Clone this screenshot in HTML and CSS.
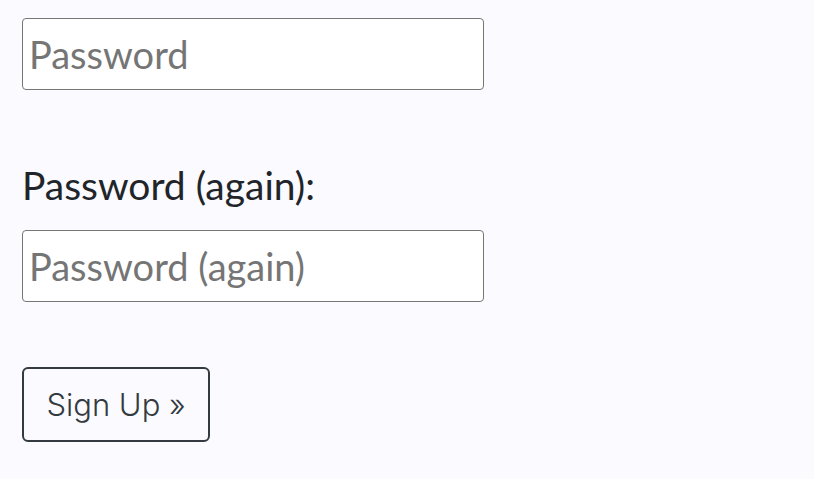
FILE: index.html
```html
<!DOCTYPE html>
<html>
<head>
<meta charset="utf-8">
<link rel="stylesheet" href="styles.css">
</head>
<body>
<form class="form">
  <input class="field" type="password" placeholder="Password">
  <label class="label">Password (again):</label>
  <input class="field field-again" type="password" placeholder="Password (again)">
  <button class="btn" type="button">Sign Up »</button>
</form>
</body>
</html>
```
FILE: styles.css
```css
html, body {
  margin: 0;
  background: #fafaff;
}
body {
  padding: 18px 22px;
  font-family: "Lato", "Liberation Sans", sans-serif;
}
.form {
  display: flex;
  flex-direction: column;
  align-items: flex-start;
}
.field {
  box-sizing: border-box;
  width: 462px;
  height: 72px;
  margin: 0;
  padding: 0 6px;
  border: 1px solid #767676;
  border-radius: 4px;
  background: #fff;
  font-family: "Lato", "Liberation Sans", sans-serif;
  font-size: 38px;
  color: #212529;
  outline: none;
}
.field::placeholder {
  color: #757575;
  opacity: 1;
}
.label {
  margin-top: 75px;
  height: 40px;
  line-height: 40px;
  font-size: 39px;
  color: #212529;
}
.field-again {
  margin-top: 25px;
}
.btn {
  box-sizing: border-box;
  margin-top: 65px;
  width: 188px;
  height: 75px;
  padding: 0;
  border: 2px solid #343a40;
  border-radius: 6px;
  background: transparent;
  font-family: "Inter", "Liberation Sans", sans-serif;
  font-weight: 300;
  font-size: 31px;
  color: #343a40;
}
```
